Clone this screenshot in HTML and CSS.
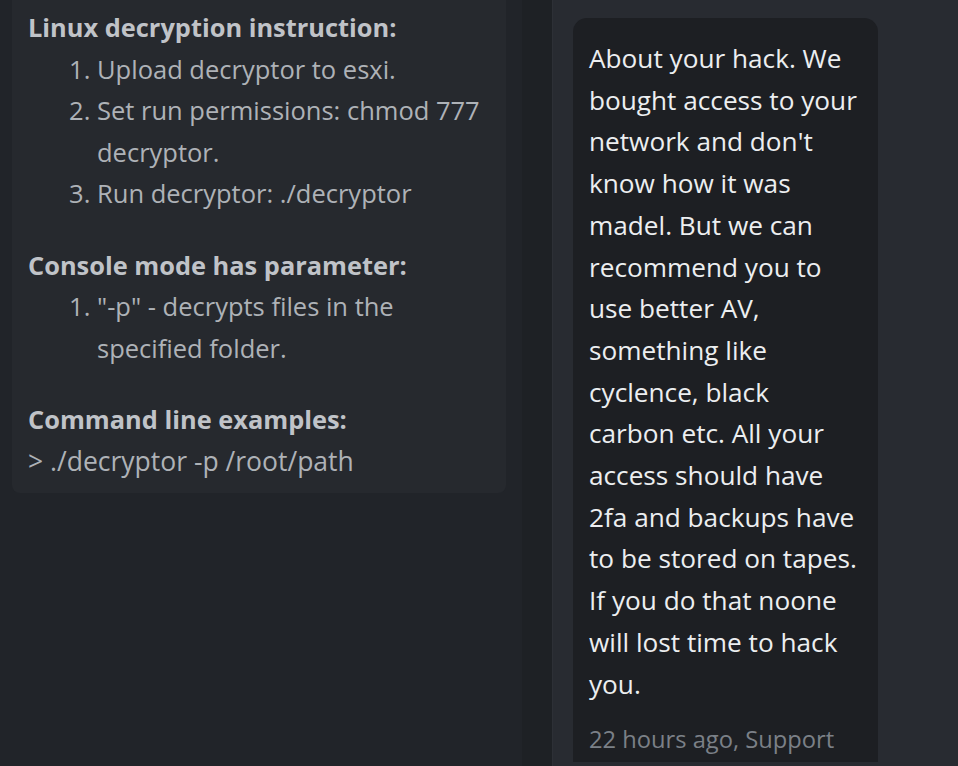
FILE: index.html
```html
<!DOCTYPE html>
<html>
<head>
<meta charset="utf-8">
<link rel="stylesheet" href="styles.css">
</head>
<body>
<div class="app">
  <section class="left">
    <div class="card">
      <p class="head">Linux decryption instruction:</p>
      <ol class="steps">
        <li>Upload decryptor to esxi.</li>
        <li>Set run permissions: chmod 777 decryptor.</li>
        <li>Run decryptor: ./decryptor</li>
      </ol>
      <p class="head">Console mode has parameter:</p>
      <ol class="steps">
        <li>"-p" - decrypts files in the specified folder.</li>
      </ol>
      <p class="head">Command line examples:</p>
      <p class="cmd">&gt; ./decryptor -p /root/path</p>
    </div>
  </section>
  <div class="gutter"></div>
  <section class="right">
    <div class="bubble">
      <p class="msg">About your hack. We bought access to your network and don't know how it was madel. But we can recommend you to use better AV, something like cyclence, black carbon etc. All your access should have 2fa and backups have to be stored on tapes. If you do that noone will lost time to hack you.</p>
      <p class="meta">22 hours ago, Support</p>
    </div>
  </section>
</div>
</body>
</html>
```
FILE: styles.css
```css
html, body {
  margin: 0;
  padding: 0;
  background: #212429;
}
body {
  font-family: "Open Sans", "Noto Sans", sans-serif;
  width: 958px;
  height: 766px;
  overflow: hidden;
}
.app {
  display: flex;
  height: 766px;
}
.left {
  width: 522px;
  padding-left: 12px;
  box-sizing: border-box;
  background: #212429;
}
.card {
  width: 494px;
  box-sizing: border-box;
  background: #26292e;
  border-radius: 0 0 8px 8px;
  padding: 7px 16px 11px;
  color: #aeb2b7;
  font-size: 25.5px;
  line-height: 41.5px;
}
.card p { margin: 0; }
.head {
  font-weight: 700;
  color: #c0c3c8;
  font-size: 25.4px;
}
.steps {
  margin: 0 0 30px;
  padding-left: 69px;
}
.cmd {
  font-size: 26.5px;
}
.gutter {
  width: 30px;
  background: #1e2125;
  border-right: 1px solid #2d3036;
}
.right {
  flex: 1;
  background: #282b31;
  padding: 18px 0 0 20px;
}
.bubble {
  width: 305px;
  height: 744px;
  box-sizing: border-box;
  background: #1d1f23;
  border-radius: 14px 14px 0 0;
  padding: 20px 20px 0 16px;
}
.msg {
  margin: 0;
  color: #eceef0;
  font-size: 26.2px;
  line-height: 41.7px;
}
.meta {
  margin: 14px 0 0;
  color: #7b8087;
  font-size: 23.7px;
  line-height: 41.7px;
}
```
